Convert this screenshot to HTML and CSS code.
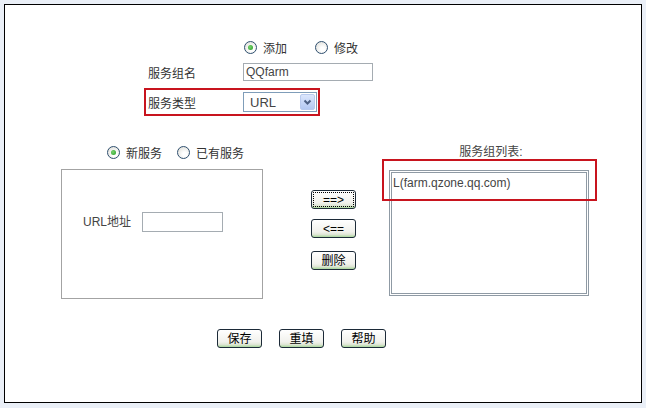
FILE: index.html
```html
<!DOCTYPE html>
<html lang="zh-CN">
<head>
    <meta charset="UTF-8">
    <title>服务组</title>
    <link rel="stylesheet" href="styles.css">
</head>
<body>
    <div class="frame">
        <div class="group-form">
            <div class="mode-row">
                <span class="radio checked"></span><span class="opt">添加</span>
                <span class="radio second"></span><span class="opt">修改</span>
            </div>
            <div class="name-row">
                <span class="label">服务组名</span>
                <input class="textbox name-box" type="text" value="QQfarm">
            </div>
            <div class="type-row">
                <span class="label">服务类型</span>
                <span class="select">URL
                    <span class="drop">
                        <svg width="13" height="14" viewBox="0 0 13 14"><polyline points="3.5,5.5 6.5,8.5 9.5,5.5" fill="none" stroke="#4d6185" stroke-width="2"/></svg>
                    </span>
                </span>
            </div>
        </div>

        <div class="services">
            <div class="left-col">
                <div class="kind-row">
                    <span class="radio checked"></span><span class="opt">新服务</span>
                    <span class="radio second-kind"></span><span class="opt">已有服务</span>
                </div>
                <div class="service-box">
                    <span class="url-label">URL地址</span>
                    <input class="textbox url-box" type="text">
                </div>
            </div>

            <div class="move-col">
                <button class="btn focused">==&gt;</button>
                <button class="btn back">&lt;==</button>
                <button class="btn del">删除</button>
            </div>

            <div class="right-col">
                <div class="list-title">服务组列表:</div>
                <div class="listbox">
                    <div class="item">L(farm.qzone.qq.com)</div>
                </div>
                <!-- highlight drawn over the list -->
                <div class="mark"></div>
            </div>
        </div>

        <div class="actions">
            <button class="btn">保存</button>
            <button class="btn">重填</button>
            <button class="btn">帮助</button>
        </div>
    </div>
</body>
</html>
```

FILE: styles.css
```css
body {
    margin: 0;
    background-color: #eaeff7;
    font-family: "Liberation Sans", "Noto Sans CJK SC", sans-serif;
    font-size: 12px;
    color: #333;
}

.frame {
    margin: 4px;
    width: 636px;
    height: 397px;
    border: 1px solid #000;
    background-color: #fff;
}

/* top form */
.group-form {
    padding: 34px 0 0 143px;
}

.mode-row,
.kind-row {
    display: flex;
    align-items: center;
    height: 16px;
}

.mode-row {
    padding-left: 96px;
}

.radio {
    width: 11px;
    height: 11px;
    border: 1px solid #2f4f6f;
    border-radius: 50%;
    background: radial-gradient(circle at 60% 65%, #fff 20%, #dcdcd6 95%);
    margin-right: 6px;
    position: relative;
}

.radio.checked::after {
    content: "";
    position: absolute;
    left: 3px;
    top: 3px;
    width: 5px;
    height: 5px;
    border-radius: 50%;
    background: radial-gradient(circle at 40% 40%, #7ad46e, #1f9a22);
}

.mode-row .second {
    margin-left: 28px;
}

.kind-row .second-kind {
    margin-left: 15px;
}

.name-row {
    display: flex;
    align-items: center;
    margin-top: 8px;
}

.label {
    width: 95px;
}

.textbox {
    box-sizing: border-box;
    border: 1px solid #a5acb2;
    font-family: "Liberation Sans", sans-serif;
    font-size: 12px;
    color: #444;
    padding: 0 2px;
    margin: 0;
    outline: none;
}

.name-box {
    width: 130px;
    height: 18px;
}

.type-row {
    display: flex;
    align-items: center;
    box-sizing: border-box;
    width: 176px;
    height: 28px;
    margin: 7px 0 0 -4px;
    padding: 0 1px 0 2px;
    border: 2px solid #c8141e;
}

.select {
    box-sizing: border-box;
    display: flex;
    align-items: center;
    justify-content: space-between;
    width: 74px;
    height: 20px;
    border: 1px solid #7f9db9;
    padding-left: 6px;
    font-size: 13px;
    color: #444;
}

.drop {
    display: flex;
    width: 15px;
    height: 16px;
    margin-right: 1px;
    align-items: center;
    justify-content: center;
    border: 1px solid #b9cbef;
    border-radius: 2px;
    box-sizing: border-box;
    background: linear-gradient(#dbe6fd, #b4c9f3);
}

/* service area */
.services {
    display: flex;
    margin-top: 28px;
    padding-left: 56px;
}

.left-col {
    width: 202px;
}

.kind-row {
    padding-left: 46px;
}

.service-box {
    box-sizing: border-box;
    height: 130px;
    margin-top: 9px;
    border: 1px solid #a3a3a3;
    padding: 42px 0 0 21px;
    display: flex;
    align-items: flex-start;
}

.url-label {
    line-height: 20px;
    margin-right: 11px;
    color: #444;
}

.url-box {
    width: 81px;
    height: 20px;
}

.move-col {
    width: 45px;
    margin-left: 48px;
    padding-top: 46px;
    display: flex;
    flex-direction: column;
}

.btn {
    box-sizing: border-box;
    width: 45px;
    height: 19px;
    padding: 0;
    border: 1px solid #1c2a38;
    border-radius: 3px;
    background: linear-gradient(#ffffff, #f1f1ec 70%, #dfe6d6 85%, #a9d79c);
    font-family: "Liberation Sans", "Noto Sans CJK SC", sans-serif;
    font-size: 12px;
    color: #000;
    line-height: 16px;
}

.btn.focused {
    outline: 1px dotted #000;
    outline-offset: -3px;
}

.move-col .back {
    margin-top: 10px;
}

.move-col .del {
    margin-top: 13px;
}

.right-col {
    position: relative;
    width: 216px;
    margin-left: 25px;
}

.list-title {
    height: 16px;
    line-height: 16px;
    text-align: center;
    color: #444;
    padding-left: 4px;
}

.listbox {
    box-sizing: border-box;
    width: 200px;
    height: 126px;
    margin: 10px 0 0 8px;
    border: 3px double #8f9aa4;
    padding: 3px 0 0 1px;
}

.item {
    font-size: 12px;
    color: #444;
    line-height: 15px;
}

.mark {
    position: absolute;
    left: 1px;
    top: 15px;
    width: 211px;
    height: 38px;
    border: 2px solid #c8141e;
}

.actions {
    display: flex;
    gap: 17px;
    margin-top: 30px;
    padding-left: 212px;
}
```
